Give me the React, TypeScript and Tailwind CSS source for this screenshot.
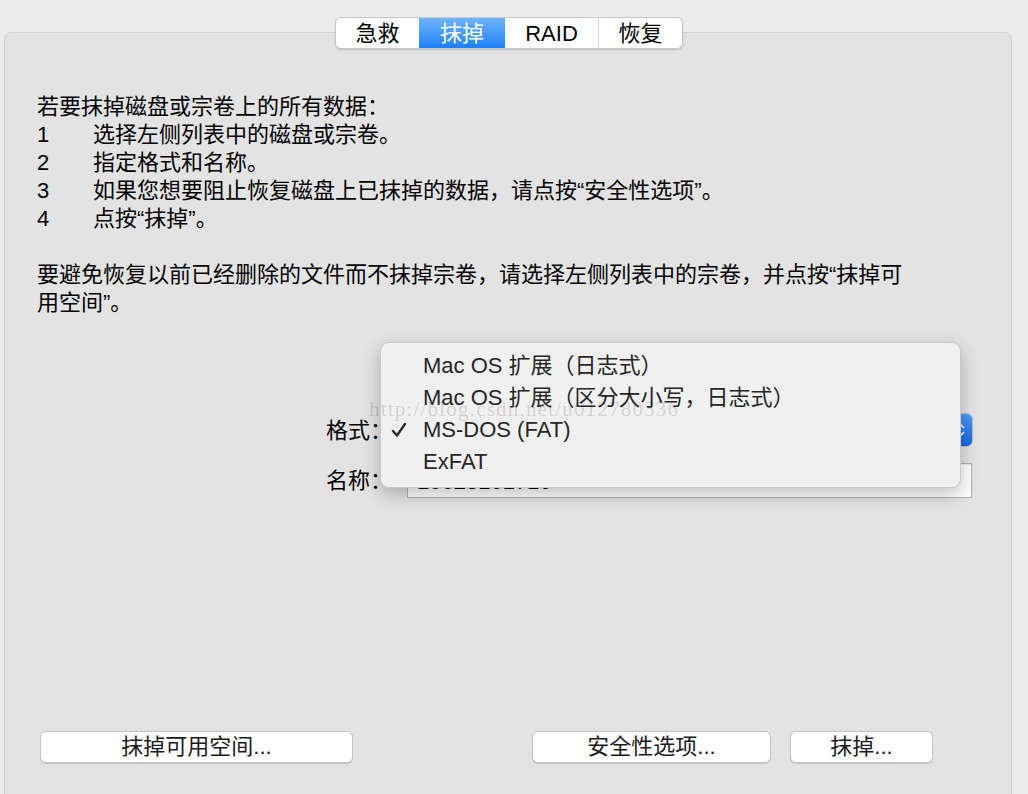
import React from "react";

const font = { fontFamily: '"Liberation Sans", "Noto Sans CJK SC", sans-serif' };

const tabs = [
  { label: "急救", w: "w-[83px]" },
  { label: "抹掉", w: "w-[86px]", active: true },
  { label: "RAID", w: "w-[93px]" },
  { label: "恢复", w: "w-[84px]" },
];

const steps = [
  "选择左侧列表中的磁盘或宗卷。",
  "指定格式和名称。",
  "如果您想要阻止恢复磁盘上已抹掉的数据，请点按“安全性选项”。",
  "点按“抹掉”。",
];

const formats = [
  "Mac OS 扩展（日志式）",
  "Mac OS 扩展（区分大小写，日志式）",
  "MS-DOS (FAT)",
  "ExFAT",
];

function MacButton({ children, w }: { children: React.ReactNode; w: string }) {
  return (
    <button
      className={`${w} h-[32px] rounded-[6px] border border-[#c4c4c4] bg-white text-[22px] leading-none text-[#1a1a1a] shadow-[0_1px_1px_rgba(0,0,0,0.15)]`}
    >
      {children}
    </button>
  );
}

export default function App() {
  return (
    <div className="h-[794px] w-[1028px] overflow-hidden bg-[#ececec] pt-[17px]" style={font}>
      {/* segmented tabs */}
      <div className="relative z-10 flex justify-center pr-[10px]">
        <div className="flex h-[32px] overflow-hidden rounded-[6px] border border-[#c8c8c8] bg-white shadow-[0_1px_2px_rgba(0,0,0,0.18)]">
          {tabs.map((t, i) => (
            <div
              key={t.label}
              className={`${t.w} flex items-center justify-center text-[22px] ${
                t.active
                  ? "bg-gradient-to-b from-[#6db4fb] to-[#1a80fb] text-white"
                  : "text-black"
              } ${i > 0 && !t.active && !tabs[i - 1].active ? "border-l border-[#d6d6d6]" : ""}`}
            >
              {t.label}
            </div>
          ))}
        </div>
      </div>

      {/* panel */}
      <div className="relative -mt-[17px] ml-[4px] h-[800px] w-[1008px] rounded-[7px] border border-[#d3d3d3] bg-[#e3e3e3] pl-[32px] pt-[60px]">
        <div className="text-[22px] leading-[28px] text-black">
          <p>若要抹掉磁盘或宗卷上的所有数据：</p>
          {steps.map((s, i) => (
            <p key={s} className="flex">
              <span className="w-[56px]">{i + 1}</span>
              <span>{s}</span>
            </p>
          ))}
          <p className="h-[28px]" />
          <p className="w-[872px]">
            要避免恢复以前已经删除的文件而不抹掉宗卷，请选择左侧列表中的宗卷，并点按“抹掉可用空间”。
          </p>
        </div>

        {/* form */}
        <div className="mt-[96px] flex flex-col gap-[16px] pl-[289px] text-[22px] text-black">
          <div className="flex items-center">
            <span className="w-[66px]">格式：</span>
            <div className="ml-[15px] flex h-[34px] w-[566px] overflow-hidden rounded-[6px] border border-[#bdbdbd] bg-white">
              <div className="flex-1" />
              <div className="flex w-[22px] items-center justify-center bg-gradient-to-b from-[#4c9bf7] to-[#1666e0]">
                <svg width="10" height="18" viewBox="0 0 10 18" fill="none" stroke="white" strokeWidth="1.6">
                  <path d="M2 7 L5 4 L8 7" />
                  <path d="M2 11 L5 14 L8 11" />
                </svg>
              </div>
            </div>
          </div>
          <div className="flex items-center">
            <span className="w-[66px]">名称：</span>
            <div className="ml-[15px] flex h-[35px] w-[565px] items-center border border-[#b0b0b0] bg-white pl-[9px] pt-[2px] shadow-[inset_0_1px_1px_rgba(0,0,0,0.08)]">
              16623161716
            </div>
          </div>
        </div>

        {/* bottom buttons */}
        <div className="mt-[233px] flex pl-[3px]">
          <MacButton w="w-[313px]">抹掉可用空间...</MacButton>
          <div className="ml-[179px]">
            <MacButton w="w-[239px]">安全性选项...</MacButton>
          </div>
          <div className="ml-[19px]">
            <MacButton w="w-[143px]">抹掉...</MacButton>
          </div>
        </div>

        {/* popup menu overlay */}
        <div className="absolute left-[375px] top-[309px] z-20 w-[581px] rounded-[9px] border border-[#c9c9c9] bg-[#f0f0f0] pb-[10px] pt-[6px] shadow-[0_6px_18px_rgba(0,0,0,0.25)]">
          {formats.map((f) => (
            <div key={f} className="relative flex h-[32px] items-center pl-[42px] text-[22px] text-[#262626]">
              {f === "MS-DOS (FAT)" && (
                <svg
                  className="absolute left-[10px] top-[9px]"
                  width="16"
                  height="16"
                  viewBox="0 0 16 16"
                  fill="none"
                  stroke="#2a2a2a"
                  strokeWidth="2.4"
                  strokeLinecap="round"
                  strokeLinejoin="round"
                >
                  <path d="M2 9 L6 13.5 L14 2" />
                </svg>
              )}
              {f}
            </div>
          ))}
        </div>

        {/* watermark */}
        <div
          className="pointer-events-none absolute left-[364px] top-[361px] z-30 text-[21px] tracking-[1.2px] text-black/15"
          style={{ fontFamily: '"Liberation Serif", serif' }}
        >
          http://blog.csdn.net/u012780336
        </div>
      </div>
    </div>
  );
}
